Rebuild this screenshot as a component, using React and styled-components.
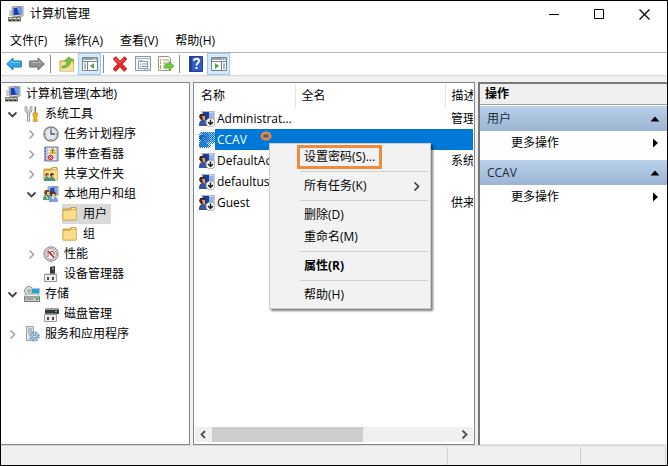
import React from 'react'
import styled, { createGlobalStyle } from 'styled-components'

const GlobalStyle = createGlobalStyle`
  * {
    box-sizing: border-box;
  }
  body {
    margin: 0;
    color: #000;
    font: 12px/20px 'Open Sans', 'Noto Sans CJK SC', sans-serif;
  }
  button {
    border: 0;
    padding: 0;
    color: inherit;
    background: none;
    font: inherit;
    text-align: left;
    white-space: nowrap;
  }
  svg {
    display: block;
    flex: none;
  }
`

const Window = styled.div`
  display: flex;
  flex-direction: column;
  min-height: 100vh;
  border: 1px solid #000;
  background: #f0f0f0;
`
const TitleBar = styled.header`
  display: flex;
  align-items: center;
  height: 26px;
  padding-left: 7px;
  background: #fff;
`
const Title = styled.h1`
  flex: 1;
  margin: 0 0 0 6px;
  font-size: 12px;
  font-weight: 400;
`
const WindowButton = styled.button`
  display: flex;
  align-items: center;
  justify-content: center;
  width: 45px;
  height: 26px;
`
const MenuBar = styled.nav`
  display: flex;
  align-items: center;
  gap: 17px;
  height: 26px;
  padding: 2px 9px 0;
  border-bottom: 1px solid #b4b4b4;
  background: #fff;
`
const ToolBar = styled.div`
  display: flex;
  align-items: center;
  height: 23px;
  padding-left: 1px;
  border-bottom: 1px solid #d5d5d5;
  background: #fff;
`
const ToolButton = styled.button`
  display: flex;
  align-items: center;
  justify-content: center;
  width: 23px;
  height: 22px;
  border: 1px solid ${p => (p.$on ? '#99cdf5' : 'transparent')};
  background: ${p => (p.$on ? '#d5eafa' : 'none')};
`
const ToolDivider = styled.span`
  width: 1px;
  height: 18px;
  margin: 0 4px 0 2px;
  background: #8c8c8c;
`
const Body = styled.main`
  display: grid;
  flex: 1;
  grid-template-columns: 189px minmax(0, 1fr) 189px;
  gap: 3px;
  padding-top: 6px;
`
const TreePane = styled.section`
  border: 1px solid #828790;
  border-left: 0;
  background: #fff;
`
const Tree = styled.ul`
  margin: 1px 0 0;
  padding: 0;
  list-style: none;
`
const TreeRow = styled.li`
  display: flex;
  align-items: center;
  height: 20px;
  padding-left: ${p => (p.$depth ? p.$depth * 19 - 15 : 4)}px;
`
const Toggle = styled.span`
  display: flex;
  align-items: center;
  justify-content: center;
  width: 19px;
  padding-right: 4px;
`
const TreeButton = styled.button`
  display: flex;
  align-items: center;
  gap: 5px;
  height: 20px;
  padding-right: 4px;
  background: ${p => (p.$selected ? '#d9d9d9' : 'none')};
`
const ListPane = styled.section`
  position: relative;
  display: flex;
  flex-direction: column;
  min-width: 0;
  padding: 1px;
  border: 1px solid #828790;
  background: #fff;
`
const ListView = styled.div`
  flex: 1;
  overflow: hidden;
`
const UserTable = styled.table`
  width: 400px;
  table-layout: fixed;
  border-collapse: collapse;
`
const HeadCell = styled.th`
  width: ${p => p.$width}px;
  height: 24px;
  padding: 0 0 0 6px;
  border-right: 1px solid #e5e5e5;
  font-weight: 400;
  text-align: left;
`
const UserRow = styled.tr`
  color: ${p => (p.$selected ? '#fff' : '#000')};
  td {
    height: 21px;
    padding: 0;
    line-height: 21px;
    white-space: nowrap;
  }
  td + td {
    padding-left: 6px;
    background: ${p => (p.$selected ? '#0078d7' : 'none')};
  }
`
const UserName = styled.div`
  display: flex;
  align-items: center;
  padding-left: 4px;
`
const NameLabel = styled.span`
  flex: 1;
  padding-left: 2px;
  background: ${p => (p.$selected ? '#0078d7' : 'none')};
`
const ScrollBar = styled.div`
  display: flex;
  height: 15px;
  margin-bottom: 1px;
  background: #f0f0f0;
`
const ScrollButton = styled.button`
  display: flex;
  align-items: center;
  justify-content: center;
  width: 17px;
`
const ScrollTrack = styled.div`
  flex: 1;
`
const ScrollThumb = styled.div`
  width: 62%;
  height: 15px;
  background: #cdcdcd;
`
const Mark = styled.svg`
  position: absolute;
  left: 66px;
  top: 48px;
`
const ContextMenu = styled.div`
  position: absolute;
  left: 75px;
  top: 60px;
  width: 162px;
  padding: 2px;
  border: 1px solid #ccc;
  background: #f2f2f2;
  box-shadow: 2px 2px 2px rgba(0, 0, 0, 0.5);
`
const MenuItem = styled.button`
  position: relative;
  display: flex;
  align-items: center;
  justify-content: space-between;
  width: 100%;
  height: 22px;
  padding: 0 7px 0 32px;
  font-weight: ${p => (p.$bold ? 700 : 400)};
`
const Highlight = styled.span`
  position: absolute;
  left: 25px;
  top: -1px;
  width: 85px;
  height: 24px;
  border: 3px solid #ed8b45;
`
const MenuLine = styled.hr`
  height: 1px;
  margin: 3px 0 3px 28px;
  border: 0;
  background: #d0d0d0;
`
const ActionPane = styled.section`
  border: solid #787878;
  border-width: 2px 0 0 2px;
  background: #fff;
  box-shadow: inset 0 -1px #e3e3e3;
`
const ActionTitle = styled.h2`
  height: 21px;
  margin: 0 0 1px;
  padding-left: 5px;
  border-bottom: 1px solid #a0a0a0;
  background: #f0f0f0;
  font-size: 12px;
  font-weight: 700;
`
const ActionGroup = styled.div`
  margin-bottom: 5px;
`
const ActionHeader = styled.button`
  display: flex;
  align-items: center;
  justify-content: space-between;
  width: 100%;
  height: 25px;
  padding: 0 7px;
  color: #1e2a3c;
  background: linear-gradient(#b9d1ea, #9ab4d2);
`
const ActionButton = styled.button`
  display: flex;
  align-items: center;
  justify-content: space-between;
  width: 100%;
  height: 24px;
  padding: 0 7px 0 31px;
`
const StatusBar = styled.footer`
  display: flex;
  height: 20px;
  padding: 1px 1px 0 0;
  border-top: 1px solid #d7d7d7;
`
const StatusCell = styled.div`
  flex: ${p => (p.$width ? `0 0 ${p.$width}px` : 1)};
  border-right: 1px solid #d0d0d0;
`

const Svg = ({ size = 16, children }) => (
  <svg width={size} height={size} viewBox={`0 0 ${size} ${size}`} aria-hidden='true'>
    {children}
  </svg>
)

const ComputerIcon = () => (
  <Svg>
    <path d='M4 1l11-1v10l-10 1z' fill='#d9dcd4' stroke='#92968f' />
    <path d='M5.500 2l8-.7v7.200l-8 .7z' fill='#1c3db5' />
    <path d='M9 2l4.500-.5v6L11 8z' fill='#6c9cec' />
    <path d='M1 4h3v6H1z' fill='#c8ccc6' />
    <path d='M8 10h4v2H8z' fill='#8a8e88' />
    <path d='M0 11h13v4.500H0z' fill='#75786f' />
    <path d='M1 12h3v1H1zM5 12h3v1H5zM9 12h3v1H9z' fill='#d8dbd2' />
    <path d='M1 14h2v1H1zM5 14h2v1H5zM9 14h2v1H9z' fill='#262a28' />
  </Svg>
)
const ToolsIcon = () => (
  <Svg>
    <path d='M2 .5v4L4.500 7 7 4.500v-4M4.500 6.500V15.500' fill='none' stroke='#777b7d' strokeWidth='2.600' />
    <path d='M2 1v3.500L4.500 6.500 7 4.500V1M4.500 6v9' fill='none' stroke='#e5e7e8' strokeWidth='1.200' />
    <path d='M10.500.500H12V8h-1.500z' fill='#777' />
    <path d='M9 7h4.500v3l-1 1 1 4.500H9l1-4.500-1-1z' fill='#f0b51b' stroke='#b9840e' strokeWidth='.6' />
  </Svg>
)
const ClockIcon = () => (
  <Svg>
    <circle cx='8' cy='8' r='7' fill='#eef3fa' stroke='#858a91' strokeWidth='1.600' />
    <circle cx='8' cy='8' r='5.500' fill='#dfe9f7' stroke='#d8c7a0' strokeWidth='.7' />
    <path d='M8 3.500V8h4' fill='none' stroke='#4b5563' strokeWidth='1.300' />
    <path d='M8 2v1M8 13v1M2 8h1M13 8h1' stroke='#777' />
  </Svg>
)
const EventIcon = () => (
  <Svg>
    <path d='M2 1h13v14H2z' fill='#b9cae9' stroke='#6b7aa5' />
    <path d='M5 2h8v12H5z' fill='#f5f6f2' />
    <path d='M5 4h8M5 7h8M5 10h8M5 12h8' stroke='#9ba8bc' strokeWidth='.6' />
    <path d='M9.500 1.500L13 7.500H6.500z' fill='#ffd52e' stroke='#be981b' strokeWidth='.6' />
    <path d='M9.700 3.500v2M9.700 6v1' stroke='#222' />
    <circle cx='7.500' cy='11.500' r='2.800' fill='#dd3838' />
    <path d='M6.300 10.300l2.400 2.400M8.700 10.300l-2.400 2.400' stroke='#fff' />
    <path d='M1 2h2M1 5h2M1 8h2M1 11h2M1 14h2' stroke='#586481' />
  </Svg>
)
const FolderIcon = ({ shared }) => (
  <Svg>
    <path d='M1 3h7l1-1.500h5V14H1z' fill='#e4b84f' stroke='#bf9134' strokeWidth='.8' />
    <path d='M1 4.500h7l1-1h5.500V14H1z' fill='#fbdc8a' stroke='#d7a849' strokeWidth='.7' />
    <path d='M10 2.500h3' stroke='#fff4cc' />
    {shared && (
      <>
        <path d='M1 15c0-3 1-4 3-4s3 1 3 4zM6 15c0-3 1-4 3-4s3 1 3 4z' fill='#459477' />
        <circle cx='4' cy='9' r='1.900' fill='#7b4d2c' />
        <circle cx='9' cy='9' r='1.900' fill='#4b3325' />
        <path d='M4 9h2v2H4zM9 9h2v2H9z' fill='#eac08b' />
      </>
    )}
  </Svg>
)
const GroupIcon = () => (
  <Svg>
    <path d='M5 1l10-1v9l-9 1z' fill='#bac7dc' stroke='#8c97ac' />
    <path d='M7 2l7-1v7l-7 1z' fill='#254ebe' />
    <path d='M11 1.500l3-.5v7h-2z' fill='#7fa6ee' />
    <path d='M0 14c0-4 1-5 4-5s4 2 4 5z' fill='#4f9e66' />
    <path d='M6 16c0-5 1-6 4-6s5 2 5 6z' fill='#7d9fdc' />
    <circle cx='4' cy='6.500' r='2.800' fill='#754522' />
    <circle cx='10' cy='8' r='2.800' fill='#5b351d' />
    <path d='M4 6h2.500v3H4zM9 8h3v3H9z' fill='#edc28f' />
    <path d='M3 10l2 3M9 11l1 2 1-2' stroke='#fff' fill='none' />
  </Svg>
)
const PerformanceIcon = () => (
  <Svg>
    <circle cx='8' cy='8' r='7.200' fill='#dedede' stroke='#858585' />
    <circle cx='8' cy='8' r='5.300' fill='#fff' stroke='#888' strokeWidth='.8' />
    <path d='M5 11V5.500M8 9V5l3 1v3' fill='none' stroke='#9c4450' />
    <path d='M5 5l6 6.500' stroke='#d21826' strokeWidth='1.600' />
  </Svg>
)
const DeviceIcon = ({ disk }) => (
  <Svg>
    {disk ? (
      <>
        <path d='M3 2h12l1 2v4H2V4z' fill='#34383b' />
        <path d='M3 2h12l1 2H2z' fill='#9a9fa1' />
        <path d='M12 5h2v1h-2z' fill='#75c77b' />
      </>
    ) : (
      <>
        <path d='M7 1l5-1v8H7z' fill='#30363a' />
        <path d='M9 1h2v3H9z' fill='#70787b' />
      </>
    )}
    <path d='M2 7.500h12V10H2z' fill='#b4b6b4' />
    <path d='M1.500 8.500h12v7h-12z' fill='#eee' stroke='#999' />
    <path d='M4 11h2v3H4zM9 11h2v3H9z' fill='#4d4d4d' />
  </Svg>
)
const StorageIcon = () => (
  <Svg>
    <circle cx='5' cy='5' r='4.500' fill='#d7dedf' stroke='#8b9494' />
    <circle cx='5' cy='5' r='1.300' fill='#fff' stroke='#818c8c' />
    <path d='M7 2h9v6H7z' fill='#b6c0c0' />
    <path d='M8 3h7v4H8z' fill='#18a7e2' />
    <path d='M2 8h12l2 3H0z' fill='#f1f1ea' stroke='#a6a6a0' />
    <path d='M.5 11h15v4.500H.5z' fill='#cacbc4' stroke='#777a75' />
    <path d='M2 13h7' stroke='#777' />
    <path d='M12 13h2' stroke='#2cab3f' strokeWidth='2' />
  </Svg>
)
const ServiceIcon = () => (
  <Svg>
    <path d='M2.500.5h7v14h-7z' fill='#dfe4e6' stroke='#9aa3a6' />
    <path d='M4 3h4M4 5h4M4 7h4' stroke='#8b979b' />
    <circle cx='10.500' cy='10.500' r='4.300' fill='#a9c4df' stroke='#7d9fc2' strokeWidth='2' strokeDasharray='2 1.400' />
    <circle cx='10.500' cy='10.500' r='1.500' fill='#fff' stroke='#6081a2' />
  </Svg>
)
const UserIcon = ({ selected }) => (
  <Svg>
    <defs>
      <pattern id='dither' width='2' height='2' patternUnits='userSpaceOnUse'>
        <path d='M0 0h1v1H0zM1 1h1v1H1z' fill='#0078d7' />
      </pattern>
    </defs>
    <path d='M3 0h12v9L4 10z' fill='#d2d9e9' stroke='#8d9bb3' />
    <path d='M4 1h6v8H4z' fill={selected ? '#5c8fd6' : '#183da1'} />
    <path d='M10 2h4v6h-4z' fill='#91b4ef' />
    <path d='M0 15c0-4 1-6 4-6s5 2 5 6z' fill={selected ? '#3f82cc' : '#38529b'} />
    <path d='M1 3h4l2 3-1 3H2L0 6z' fill={selected ? '#2a5590' : '#4a291c'} />
    <path d='M3 5h3v4H4z' fill={selected ? '#7f9cc0' : '#dca26d'} />
    {selected ? (
      <path d='M0 2l3-2h13v11l-4 1-1 4H0z' fill='url(#dither)' shapeRendering='crispEdges' />
    ) : (
      <>
        <circle cx='11.500' cy='11.500' r='4.500' fill='#fff' stroke='#999' />
        <path d='M11.500 8.500v5M9 11l2.500 2.500L14 11' fill='none' stroke='#202020' strokeWidth='1.500' />
      </>
    )}
  </Svg>
)

const ArrowIcon = ({ forward }) => (
  <Svg>
    <g transform={forward ? 'translate(16 0) scale(-1 1)' : undefined}>
      <path
        d='M.7 8L7 2v3h8.300v6H7v3z'
        fill={forward ? '#929292' : '#2ba5e7'}
        stroke={forward ? '#666' : '#247ab2'}
      />
      <path d='M3 7.500L6 5v1.500h8' fill='none' stroke={forward ? '#b8b8b8' : '#78d1fa'} />
    </g>
  </Svg>
)
const UpFolderIcon = () => (
  <Svg>
    <path d='M1 5h6l1-2h6.500v12H1z' fill='#f6d98b' stroke='#bd9b4f' />
    <path d='M1.500 7.500h13V15h-13z' fill='#f9df98' />
    <path d='M3 10c4 0 5-2 5-5H5.500L10 .8 14 5h-2.500c0 4-3 7-8.500 7z' fill='#6cc83b' stroke='#4c982a' strokeWidth='.6' />
  </Svg>
)
const PanelIcon = ({ right }) => (
  <Svg>
    <path d='M.5 1.500h15v13H.5z' fill='#fff' stroke='#79838c' />
    <path d='M1 2h14v2H1z' fill='#9aa3aa' />
    <path d='M1 5.500h14' stroke='#79838c' />
    <path d='M11 3h1M13 3h1' stroke='#fff' />
    {right ? (
      <>
        <path d='M10.500 6v8' stroke='#79838c' />
        <path d='M12 8h2M12 10h2M12 12h2' stroke='#65727b' />
        <path d='M4 7v6l4-3z' fill='#45a83c' />
      </>
    ) : (
      <>
        <path d='M5.500 6v8' stroke='#79838c' />
        <path d='M2 8h2M2 10h2M2 12h2' stroke='#65727b' />
        <path d='M12 7v6L8 10z' fill='#45a83c' />
      </>
    )}
  </Svg>
)
const DeleteIcon = () => (
  <Svg>
    <path d='M1 3l3-2.500L8 5l4.500-4.500L15 3l-4.500 5L15 13l-3 2.500-4-4.500-4.500 4.500L1 13l4.500-5z' fill='#df2828' stroke='#b92121' strokeWidth='.6' />
    <path d='M3 3l5 4 4-4' fill='none' stroke='#f26a60' />
  </Svg>
)
const PropertiesIcon = () => (
  <Svg>
    <path d='M.5.500h15v14H.5z' fill='#f5f7f7' stroke='#8d989d' />
    <path d='M1 2.500h14' stroke='#a8b2b7' />
    <path d='M3.500 5.500h9v7h-9z' fill='#fff' stroke='#8999a6' />
    <path d='M3.500 4h4v2h-4z' fill='#9cafbe' />
    <path d='M5 8h1M7 8h5M5 10.500h1M7 10.500h5' stroke='#7f97aa' />
    <path d='M9 14h2M12 14h2' stroke='#6bb5da' />
  </Svg>
)
const ExportIcon = () => (
  <Svg>
    <path d='M.5.500h10l2 2v12H.5z' fill='#fffce9' stroke='#9b987f' />
    <path d='M5 4h6M5 7h6M5 10h3M5 12h4' stroke='#9699a2' />
    <path d='M2 4h1M2 7h1M2 10h1M2 12h1' stroke='#333' />
    <path d='M7 8h4V5.500l5 4.500-5 4.500V12H7z' fill='#70cb38' stroke='#4fa629' strokeWidth='.6' />
  </Svg>
)
const HelpIcon = () => (
  <Svg>
    <path d='M1.500.500h13v15h-13z' fill='#315cc5' stroke='#263e8e' />
    <path d='M2 1h2v14H2z' fill='#203e9d' />
    <path d='M6 5c0-3 5-3 5 0 0 2-2.500 2-2.500 4.500M8.500 11v2' fill='none' stroke='#fff' strokeWidth='1.900' />
  </Svg>
)
const Chevron = ({ open, left, color = '#a0a0a0', bold }) => (
  <Svg size={9}>
    <path
      d={open ? 'M.5 2.500L4.500 6.500l4-4' : left ? 'M6 1L2.500 4.500 6 8' : 'M2.500.500l4 4-4 4'}
      fill='none'
      stroke={open ? '#404040' : color}
      strokeWidth={bold || open ? 1.8 : 1.5}
    />
  </Svg>
)
const ActionArrow = ({ up }) => (
  <Svg size={10}>
    <path d={up ? 'M5 2.500L9.500 7.500H.5z' : 'M3 .5L8 5 3 9.500z'} fill='#000' />
  </Svg>
)

const menus = ['文件(F)', '操作(A)', '查看(V)', '帮助(H)']

const tree = [
  { label: '计算机管理(本地)', depth: 0, icon: <ComputerIcon /> },
  { label: '系统工具', depth: 1, icon: <ToolsIcon />, open: true },
  { label: '任务计划程序', depth: 2, icon: <ClockIcon />, open: false },
  { label: '事件查看器', depth: 2, icon: <EventIcon />, open: false },
  { label: '共享文件夹', depth: 2, icon: <FolderIcon shared />, open: false },
  { label: '本地用户和组', depth: 2, icon: <GroupIcon />, open: true },
  { label: '用户', depth: 3, icon: <FolderIcon />, selected: true },
  { label: '组', depth: 3, icon: <FolderIcon /> },
  { label: '性能', depth: 2, icon: <PerformanceIcon />, open: false },
  { label: '设备管理器', depth: 2, icon: <DeviceIcon /> },
  { label: '存储', depth: 1, icon: <StorageIcon />, open: true },
  { label: '磁盘管理', depth: 2, icon: <DeviceIcon disk /> },
  { label: '服务和应用程序', depth: 1, icon: <ServiceIcon />, open: false }
]

const users = [
  { name: 'Administrat...', note: '管理' },
  { name: 'CCAV', note: '', selected: true },
  { name: 'DefaultAc...', note: '系统' },
  { name: 'defaultuser0', note: '' },
  { name: 'Guest', note: '供来' }
]

const TreeItem = ({ item }) => (
  <TreeRow $depth={item.depth}>
    {item.depth > 0 && (
      <Toggle>{item.open !== undefined && <Chevron open={item.open} />}</Toggle>
    )}
    <TreeButton $selected={item.selected}>
      {item.icon}
      {item.label}
    </TreeButton>
  </TreeRow>
)

const UserList = () => (
  <ListView>
    <UserTable>
      <thead>
        <tr>
          <HeadCell $width={100}>名称</HeadCell>
          <HeadCell $width={150}>全名</HeadCell>
          <HeadCell>描述</HeadCell>
        </tr>
      </thead>
      <tbody>
        {users.map(user => (
          <UserRow key={user.name} $selected={user.selected}>
            <td>
              <UserName>
                <UserIcon selected={user.selected} />
                <NameLabel $selected={user.selected}>{user.name}</NameLabel>
              </UserName>
            </td>
            <td />
            <td>{user.note}</td>
          </UserRow>
        ))}
      </tbody>
    </UserTable>
  </ListView>
)

const UserMenu = () => (
  <ContextMenu>
    <MenuItem>
      设置密码(S)...
      <Highlight />
    </MenuItem>
    <MenuLine />
    <MenuItem>
      所有任务(K)
      <Chevron color='#333' />
    </MenuItem>
    <MenuLine />
    <MenuItem>删除(D)</MenuItem>
    <MenuItem>重命名(M)</MenuItem>
    <MenuLine />
    <MenuItem $bold>属性(R)</MenuItem>
    <MenuLine />
    <MenuItem>帮助(H)</MenuItem>
  </ContextMenu>
)

const App = () => (
  <Window>
    <GlobalStyle />
    <TitleBar>
      <ComputerIcon />
      <Title>计算机管理</Title>
      <WindowButton aria-label='最小化'>
        <Svg size={11}><path d='M0 5.500h10' stroke='#000' /></Svg>
      </WindowButton>
      <WindowButton aria-label='最大化'>
        <Svg size={11}><path d='M.5.500h9v9h-9z' fill='none' stroke='#000' /></Svg>
      </WindowButton>
      <WindowButton aria-label='关闭'>
        <Svg size={11}><path d='M.5.500l10 10M10.500.500l-10 10' stroke='#000' strokeWidth='1.200' /></Svg>
      </WindowButton>
    </TitleBar>
    <MenuBar>
      {menus.map(label => <button key={label}>{label}</button>)}
    </MenuBar>
    <ToolBar>
      <ToolButton aria-label='后退'><ArrowIcon /></ToolButton>
      <ToolButton aria-label='前进'><ArrowIcon forward /></ToolButton>
      <ToolDivider />
      <ToolButton aria-label='上一级'><UpFolderIcon /></ToolButton>
      <ToolButton $on aria-label='控制台树'><PanelIcon /></ToolButton>
      <ToolDivider />
      <ToolButton aria-label='删除'><DeleteIcon /></ToolButton>
      <ToolButton aria-label='属性'><PropertiesIcon /></ToolButton>
      <ToolButton aria-label='导出列表'><ExportIcon /></ToolButton>
      <ToolDivider />
      <ToolButton aria-label='帮助'><HelpIcon /></ToolButton>
      <ToolButton $on aria-label='操作窗格'><PanelIcon right /></ToolButton>
    </ToolBar>
    <Body>
      <TreePane>
        <Tree>
          {tree.map(item => <TreeItem key={item.label} item={item} />)}
        </Tree>
      </TreePane>
      <ListPane>
        <UserList />
        <ScrollBar>
          <ScrollButton aria-label='向左'><Chevron left color='#505050' bold /></ScrollButton>
          <ScrollTrack><ScrollThumb /></ScrollTrack>
          <ScrollButton aria-label='向右'><Chevron color='#505050' bold /></ScrollButton>
        </ScrollBar>
        <Mark width='12' height='10' viewBox='0 0 12 10' aria-hidden='true'>
          <ellipse cx='6' cy='5' rx='4.500' ry='3.500' fill='#a0705c' stroke='#ed8b45' strokeWidth='2' />
          <path d='M4 5h4' stroke='#3c5684' strokeWidth='1.500' />
        </Mark>
        <UserMenu />
      </ListPane>
      <ActionPane>
        <ActionTitle>操作</ActionTitle>
        {['用户', 'CCAV'].map(name => (
          <ActionGroup key={name}>
            <ActionHeader>
              {name}
              <ActionArrow up />
            </ActionHeader>
            <ActionButton>
              更多操作
              <ActionArrow />
            </ActionButton>
          </ActionGroup>
        ))}
      </ActionPane>
    </Body>
    <StatusBar>
      <StatusCell />
      <StatusCell $width={133} />
      <StatusCell $width={85} />
    </StatusBar>
  </Window>
)

export default App
